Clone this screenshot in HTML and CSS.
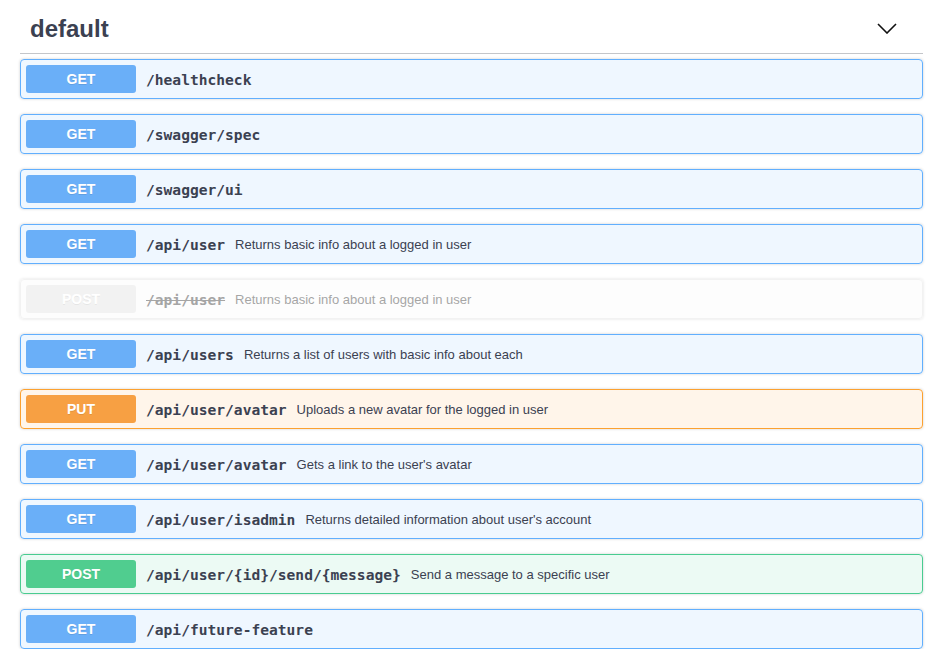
FILE: index.html
```html
<!DOCTYPE html>
<html lang="en">
<head>
<meta charset="utf-8">
<title>default</title>
<link rel="stylesheet" href="styles.css">
</head>
<body>
<div class="tag-section">
  <div class="tag-header">
    <h4 class="tag-title">default</h4>
    <svg class="chevron" width="20" height="11" viewBox="0 0 20 11" aria-hidden="true">
      <polyline points="1,1 10,10 19,1" fill="none" stroke="#111" stroke-width="1.6"/>
    </svg>
  </div>
  <div class="ops">
    <div class="op op-get"><span class="method">GET</span><span class="path">/healthcheck</span></div>
    <div class="op op-get"><span class="method">GET</span><span class="path">/swagger/spec</span></div>
    <div class="op op-get"><span class="method">GET</span><span class="path">/swagger/ui</span></div>
    <div class="op op-get"><span class="method">GET</span><span class="path">/api/user</span><span class="desc">Returns basic info about a logged in user</span></div>
    <div class="op op-deprecated"><span class="method">POST</span><span class="path">/api/user</span><span class="desc">Returns basic info about a logged in user</span></div>
    <div class="op op-get"><span class="method">GET</span><span class="path">/api/users</span><span class="desc">Returns a list of users with basic info about each</span></div>
    <div class="op op-put"><span class="method">PUT</span><span class="path">/api/user/avatar</span><span class="desc">Uploads a new avatar for the logged in user</span></div>
    <div class="op op-get"><span class="method">GET</span><span class="path">/api/user/avatar</span><span class="desc">Gets a link to the user's avatar</span></div>
    <div class="op op-get"><span class="method">GET</span><span class="path">/api/user/isadmin</span><span class="desc">Returns detailed information about user's account</span></div>
    <div class="op op-post"><span class="method">POST</span><span class="path">/api/user/{id}/send/{message}</span><span class="desc">Send a message to a specific user</span></div>
    <div class="op op-get"><span class="method">GET</span><span class="path">/api/future-feature</span></div>
  </div>
</div>
</body>
</html>
```

FILE: styles.css
```css
html, body {
  margin: 0;
  padding: 0;
  background: #fff;
  font-family: "Liberation Sans", Arial, sans-serif;
  color: #3b4151;
}

.tag-section {
  margin-left: 20px;
  width: 903px;
}

.tag-header {
  display: flex;
  align-items: center;
  justify-content: space-between;
  padding: 12px 26px 7px 10px;
  border-bottom: 1px solid rgba(59, 65, 81, 0.3);
}

.tag-title {
  margin: 0;
  font-size: 24px;
  line-height: 34px;
  font-weight: 700;
  color: #3b4151;
}

.chevron {
  display: block;
  margin-top: -2px;
}

.ops {
  display: flex;
  flex-direction: column;
  gap: 15px;
  padding-top: 5px;
}

.op {
  display: flex;
  align-items: center;
  height: 40px;
  box-sizing: border-box;
  padding: 5px;
  border: 1px solid #61affe;
  border-radius: 4px;
  box-shadow: 0 0 3px rgba(0, 0, 0, 0.19);
  background: rgba(97, 175, 254, 0.1);
}

.method {
  flex: none;
  width: 110px;
  height: 28px;
  display: flex;
  align-items: center;
  justify-content: center;
  border-radius: 3px;
  background: #6aaff8;
  color: #fff;
  font-size: 14px;
  font-weight: 700;
  text-shadow: 0 1px 0 rgba(0, 0, 0, 0.1);
}

.path {
  padding: 0 10px;
  font-family: "DejaVu Sans Mono", "Liberation Mono", monospace;
  font-weight: 700;
  font-size: 14.6px;
  color: #3b4151;
  white-space: nowrap;
}

.desc {
  font-size: 13px;
  color: #3b4151;
  white-space: nowrap;
}

.op-put {
  border-color: #fca130;
  background: rgba(252, 161, 48, 0.1);
}
.op-put .method { background: #f7a043; }

.op-post {
  border-color: #49cc90;
  background: rgba(73, 204, 144, 0.1);
}
.op-post .method { background: #50cd8f; }

.op-deprecated {
  opacity: 0.6;
  border-color: #ebebeb;
  background: rgba(235, 235, 235, 0.1);
}
.op-deprecated .method { background: #ebebeb; }
.op-deprecated .path {
  color: #6b6b6b;
  text-decoration: line-through;
}
.op-deprecated .desc { color: #6b6b6b; }
```
